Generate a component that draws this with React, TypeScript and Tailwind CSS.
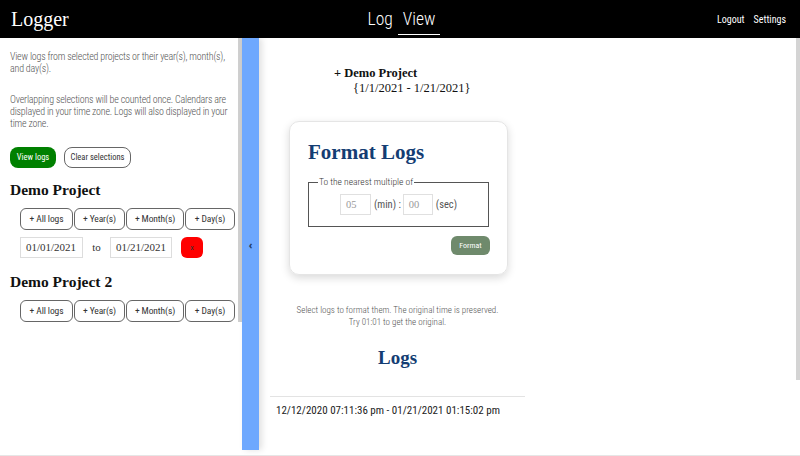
import React from 'react';

const narrow = "font-['Roboto_Condensed','Liberation_Sans',sans-serif]";
const serif = "font-['Liberation_Serif',serif]";

function AddButtons() {
  return (
    <div className={`flex gap-[1px] pl-[20px] text-[9.5px] tracking-[-0.1px] text-[#333] ${narrow}`}>
      <button className="w-[53px] h-[22px] rounded-md border border-[#666] bg-white">+ All logs</button>
      <button className="w-[51px] h-[22px] rounded-md border border-[#666] bg-white">+ Year(s)</button>
      <button className="w-[58px] h-[22px] rounded-md border border-[#666] bg-white">+ Month(s)</button>
      <button className="w-[50px] h-[22px] rounded-md border border-[#666] bg-white">+ Day(s)</button>
    </div>
  );
}

export default function App() {
  return (
    <div className="w-[800px] h-[456px] overflow-hidden bg-white flex flex-col">
      {/* Header */}
      <header className="h-[38px] bg-black flex items-center text-white shrink-0">
        <div className="w-[200px] pl-[11px]">
          <span className={`text-[20px] ${serif}`}>Logger</span>
        </div>
        <div className={`flex-1 flex justify-center pl-[8px] text-[17.5px] font-light ${narrow}`}>
          <span className="mr-[5px] h-[38px] leading-[38px]">Log</span>
          <span className="h-[35px] leading-[38px] border-b border-white px-[5px]">View</span>
        </div>
        <div className={`w-[200px] flex justify-end gap-[9px] pr-[14px] text-[10px] ${narrow}`}>
          <span>Logout</span>
          <span>Settings</span>
        </div>
      </header>

      <div className="flex h-[412px] shrink-0">
        {/* Left panel */}
        <aside className="w-[238px] shrink-0 pl-[10px] pt-[13px]">
          <div className={`text-[10px] tracking-[-0.2px] leading-[12px] text-[#555] pr-[8px] font-light ${narrow}`}>
            <p>View logs from selected projects or their year(s), month(s), and day(s).</p>
            <p className="mt-[19px]">
              Overlapping selections will be counted once. Calendars are displayed in your time zone. Logs will also displayed in your time zone.
            </p>
          </div>
          <div className={`flex gap-[8px] mt-[17px] text-[8.5px] ${narrow}`}>
            <button className="w-[46px] h-[21px] rounded-lg bg-[#008000] text-white">View logs</button>
            <button className="w-[67px] h-[21px] rounded-lg border border-[#666] text-[#333]">Clear selections</button>
          </div>

          <h2 className={`mt-[12px] text-[15.5px] font-bold text-[#111] leading-[20px] ${serif}`}>Demo Project</h2>
          <div className="-ml-[10px] mt-[8px]">
            <AddButtons />
            <div className={`flex items-center pl-[20px] mt-[7px] ${serif}`}>
              <div className="w-[63px] h-[21px] border border-[#ddd] flex items-center pl-[5px] text-[11px] text-[#333]">01/01/2021</div>
              <span className="w-[27px] text-center text-[11px] text-[#333]">to</span>
              <div className="w-[62px] h-[21px] border border-[#ddd] flex items-center pl-[5px] text-[11px] text-[#333]">01/21/2021</div>
              <button className={`ml-[9px] w-[22px] h-[21px] rounded-md bg-[#ff0000] text-[8px] text-[#333] ${narrow}`}>x</button>
            </div>
          </div>

          <h2 className={`mt-[14px] text-[15.5px] font-bold text-[#111] leading-[20px] ${serif}`}>Demo Project 2</h2>
          <div className="-ml-[10px] mt-[8px]">
            <AddButtons />
          </div>
        </aside>

        {/* Left scrollbar */}
        <div className="w-[4px] h-[284px] bg-[#cfcfcf] shrink-0" />

        {/* Collapse bar */}
        <div className="w-[17px] shrink-0 bg-[#6ea8fe] shadow-[3px_0_6px_rgba(0,0,0,0.12)] flex justify-center pt-[200px] text-[10px] text-[#1e3a5f] font-bold">
          ‹
        </div>

        {/* Right content */}
        <main className="flex-1 flex">
          <div className="flex-1">
            <div className="w-[255px] ml-[11px] pt-[28px]">
              <div className={`pl-[64px] text-[12.5px] text-[#111] leading-[15px] ${serif}`}>
                <div className="font-bold">+ Demo Project</div>
                <div className="pl-[19px]">{'{1/1/2021 - 1/21/2021}'}</div>
              </div>

              <div className="ml-[19px] mt-[25px] w-[219px] h-[154px] rounded-[10px] border border-[#e5e5e5] shadow-[0_3px_8px_rgba(0,0,0,0.15)] px-[18px] pt-[18px]">
                <h3 className={`text-[21px] font-bold text-[#143d73] leading-[24px] ${serif}`}>Format Logs</h3>
                <fieldset className={`mt-[11px] w-[181px] h-[52px] border border-[#555] px-[10px] ${narrow}`}>
                  <legend className="text-[9.5px] text-[#333] px-[1px] -ml-[1px] font-light">To the nearest multiple of</legend>
                  <div className="flex items-center justify-center text-[10.5px] text-[#555] mt-[5px]">
                    <div className="w-[31px] h-[21px] border border-[#e0e0e0] flex items-center pl-[5px] text-[#999] font-['Liberation_Serif',serif] text-[10.5px]">05</div>
                    <span className="ml-[3px]">(min) :</span>
                    <div className="ml-[2px] w-[30px] h-[21px] border border-[#e0e0e0] flex items-center pl-[5px] text-[#999] font-['Liberation_Serif',serif] text-[10.5px]">00</div>
                    <span className="ml-[3px]">(sec)</span>
                  </div>
                </fieldset>
                <div className="flex justify-end mt-[9px] -mr-[1px]">
                  <button className={`w-[39px] h-[19px] rounded-md bg-[#6f8a6c] text-white text-[8px] ${narrow}`}>Format</button>
                </div>
              </div>

              <div className={`mt-[29px] text-center text-[9px] leading-[12px] text-[#555] font-light ${narrow}`}>
                <p>Select logs to format them. The original time is preserved.</p>
                <p>Try 01:01 to get the original.</p>
              </div>

              <h3 className={`mt-[19px] text-center text-[19px] font-bold text-[#143d73] leading-[22px] ${serif}`}>Logs</h3>

              <div className="mt-[27px] border-t border-[#e3e3e3] pt-[6px] pl-[6px]">
                <p className={`text-[11px] text-[#222] whitespace-nowrap ${narrow}`}>12/12/2020 07:11:36 pm - 01/21/2021 01:15:02 pm</p>
              </div>
            </div>
          </div>
          {/* Right scrollbar */}
          <div className="w-[4px] h-[342px] bg-[#d4d4d4] shrink-0" />
        </main>
      </div>
      <div className="flex-1 border-b border-[#e6e6e6]" />
    </div>
  );
}
